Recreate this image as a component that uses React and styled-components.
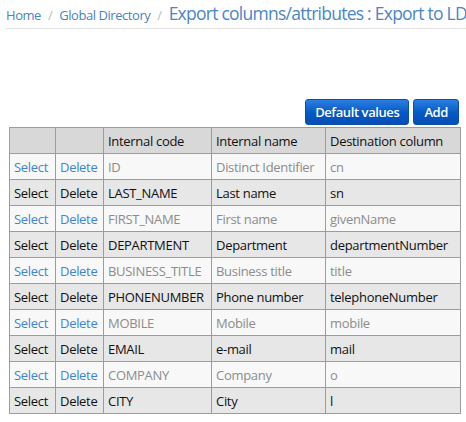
import React from "react";
import styled, { createGlobalStyle } from "styled-components";

const Global = createGlobalStyle`
  html, body { margin: 0; padding: 0; background: #ffffff; }
  body { font-family: "Open Sans", "Liberation Sans", sans-serif; overflow: hidden; }
`;

const Page = styled.div`
  width: 466px;
  height: 422px;
  overflow: hidden;
  box-sizing: border-box;
  padding: 0 0 0 6px;
`;

const Breadcrumb = styled.div`
  display: flex;
  align-items: baseline;
  white-space: nowrap;
  height: 29px;
  padding-top: 1px;
  box-sizing: border-box;
  border-bottom: 1px solid #e3e3e3;
  font-size: 13px;
  letter-spacing: -0.45px;
`;

const Crumb = styled.a`
  color: #4a82c3;
  text-decoration: none;
`;

const Sep = styled.span`
  color: #bbbbbb;
  padding: 0 7px;
`;

const Title = styled.span`
  color: #4a86c6;
  font-size: 17.5px;
  letter-spacing: -0.75px;
`;

const Content = styled.div`
  padding: 70px 7px 0 3px;
`;

const Toolbar = styled.div`
  display: flex;
  justify-content: flex-end;
  gap: 4px;
  margin-bottom: 2px;
`;

const Button = styled.button`
  height: 26px;
  padding: 0 ${(p) => p.$pad}px;
  border: 1px solid #0a4fa8;
  border-radius: 3px;
  background: linear-gradient(#2a7fe0, #0558c4 55%, #044fb4);
  color: #ffffff;
  font-family: "Open Sans", "Liberation Sans", sans-serif;
  font-size: 13px;
  font-weight: 600;
  letter-spacing: -0.4px;
  cursor: pointer;
`;

const Table = styled.table`
  border-collapse: collapse;
  table-layout: fixed;
  width: 451px;
  font-size: 13px;
  letter-spacing: -0.3px;
`;

const Th = styled.th`
  height: 25px;
  padding: 0 4px;
  border: 1px solid #9c9c9c;
  background: #d8d8d8;
  color: #111111;
  font-weight: normal;
  text-align: left;
  white-space: nowrap;
`;

const Row = styled.tr`
  background: ${(p) => (p.$alt ? "#e7e7e7" : "#f8f8f8")};
  color: ${(p) => (p.$alt ? "#111111" : "#8c8c8c")};
`;

const Td = styled.td`
  height: 25px;
  padding: 0 4px;
  border: 1px solid #9c9c9c;
  white-space: nowrap;
  overflow: hidden;
`;

const Link = styled.a`
  color: ${(p) => (p.$alt ? "#111111" : "#3d84d2")};
  text-decoration: none;
`;

const rows = [
  ["ID", "Distinct Identifier", "cn"],
  ["LAST_NAME", "Last name", "sn"],
  ["FIRST_NAME", "First name", "givenName"],
  ["DEPARTMENT", "Department", "departmentNumber"],
  ["BUSINESS_TITLE", "Business title", "title"],
  ["PHONENUMBER", "Phone number", "telephoneNumber"],
  ["MOBILE", "Mobile", "mobile"],
  ["EMAIL", "e-mail", "mail"],
  ["COMPANY", "Company", "o"],
  ["CITY", "City", "l"],
];

export default function App() {
  return (
    <>
      <Global />
      <Page>
        <Breadcrumb>
          <Crumb>Home</Crumb>
          <Sep>/</Sep>
          <Crumb>Global Directory</Crumb>
          <Sep>/</Sep>
          <Title>Export columns/attributes : Export to LDAP</Title>
        </Breadcrumb>
        <Content>
          <Toolbar>
            <Button $pad={9}>Default values</Button>
            <Button $pad={10}>Add</Button>
          </Toolbar>
          <Table>
            <colgroup>
              <col style={{ width: 46 }} />
              <col style={{ width: 48 }} />
              <col style={{ width: 108 }} />
              <col style={{ width: 114 }} />
              <col style={{ width: 135 }} />
            </colgroup>
            <thead>
              <tr>
                <Th></Th>
                <Th></Th>
                <Th>Internal code</Th>
                <Th>Internal name</Th>
                <Th>Destination column</Th>
              </tr>
            </thead>
            <tbody>
              {rows.map((r, i) => {
                const alt = i % 2 === 1;
                return (
                  <Row key={r[0]} $alt={alt}>
                    <Td><Link $alt={alt}>Select</Link></Td>
                    <Td><Link $alt={alt}>Delete</Link></Td>
                    <Td>{r[0]}</Td>
                    <Td>{r[1]}</Td>
                    <Td>{r[2]}</Td>
                  </Row>
                );
              })}
            </tbody>
          </Table>
        </Content>
      </Page>
    </>
  );
}
